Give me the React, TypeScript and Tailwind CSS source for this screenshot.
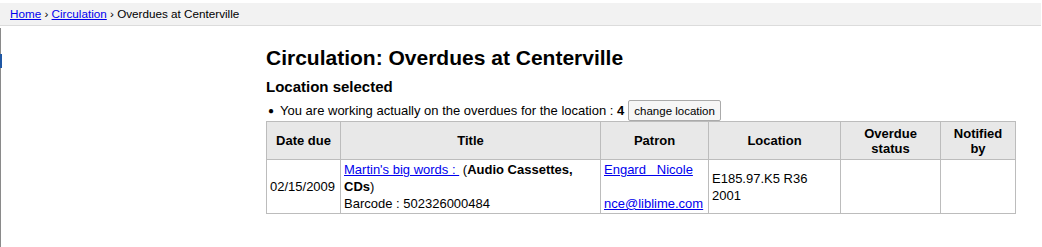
import React from 'react';

const font = { fontFamily: '"Liberation Sans", Arial, sans-serif' };

const Th: React.FC<{ children: React.ReactNode; className?: string }> = ({ children, className }) => (
  <th className={`border border-[#bcbcbc] bg-[#e8e8e8] px-1 py-[3px] text-center align-middle font-bold leading-[15px] ${className ?? ''}`}>
    {children}
  </th>
);

const Td: React.FC<{ children?: React.ReactNode; className?: string }> = ({ children, className }) => (
  <td className={`border border-[#bcbcbc] px-[3px] py-px leading-[17px] ${className ?? ''}`}>{children}</td>
);

export default function App() {
  return (
    <div className="relative h-[247px] w-[1042px] bg-white text-[13px] text-black" style={font}>
      <div className="absolute left-0 top-[25px] h-[222px] w-px bg-[#8a8a8a]" />
      <div className="absolute left-0 top-[51px] h-[14px] w-[2px] bg-[#1f57a4]" />

      <div className="mt-[3px] mr-px border-b border-[#dcdcdc] bg-[#f2f2f2] pl-[10px] pt-[3px] pb-[4px] text-[11.7px] leading-[15px]">
        <a href="#" className="text-[#0000ee] underline">Home</a>
        {' › '}
        <a href="#" className="text-[#0000ee] underline">Circulation</a>
        {' › Overdues at Centerville'}
      </div>

      <div className="ml-[266px] w-[750px]">
        <h1 className="mt-[20px] text-[21px] font-bold leading-[24px]">Circulation: Overdues at Centerville</h1>
        <h3 className="mt-[8px] text-[15px] font-bold leading-[18px]">Location selected</h3>
        <ul className="mt-[4px] pl-[2px]">
          <li className="flex h-[21px] items-center gap-[6px]">
            <span className="text-[10px] leading-none">●</span>
            <span className="leading-[16px]">
              You are working actually on the overdues for the location : <b>4</b>
            </span>
            <button className="-ml-[2px] h-[21px] rounded-[2px] border border-[#aaa] bg-[#f6f6f6] px-[5px] text-[11.5px] leading-[16px]">
              change location
            </button>
          </li>
        </ul>

        <table className="border-collapse text-[13px]">
          <thead>
            <tr className="h-[38px]">
              <Th className="w-[74px]">Date due</Th>
              <Th className="w-[260px]">Title</Th>
              <Th className="w-[108px]">Patron</Th>
              <Th className="w-[132px]">Location</Th>
              <Th className="w-[100px]">Overdue<br />status</Th>
              <Th className="w-[75px]">Notified<br />by</Th>
            </tr>
          </thead>
          <tbody>
            <tr className="h-[54px]">
              <Td className="whitespace-nowrap align-middle">02/15/2009</Td>
              <Td className="align-top">
                <div>
                  <a href="#" className="text-[#0000ee] underline">Martin's big words :&nbsp;</a>
                  {'  ('}
                  <b>Audio Cassettes,</b>
                </div>
                <div>
                  <b>CDs</b>)
                </div>
                <div>Barcode : 502326000484</div>
              </Td>
              <Td className="align-top">
                <div>
                  <a href="#" className="text-[#0000ee] underline">Engard&nbsp;&nbsp;&nbsp;Nicole</a>
                </div>
                <div className="h-[17px]" />
                <div>
                  <a href="#" className="text-[#0000ee] underline">nce@liblime.com</a>
                </div>
              </Td>
              <Td className="align-middle">
                <div>E185.97.K5 R36</div>
                <div>2001</div>
              </Td>
              <Td />
              <Td />
            </tr>
          </tbody>
        </table>
      </div>
    </div>
  );
}
